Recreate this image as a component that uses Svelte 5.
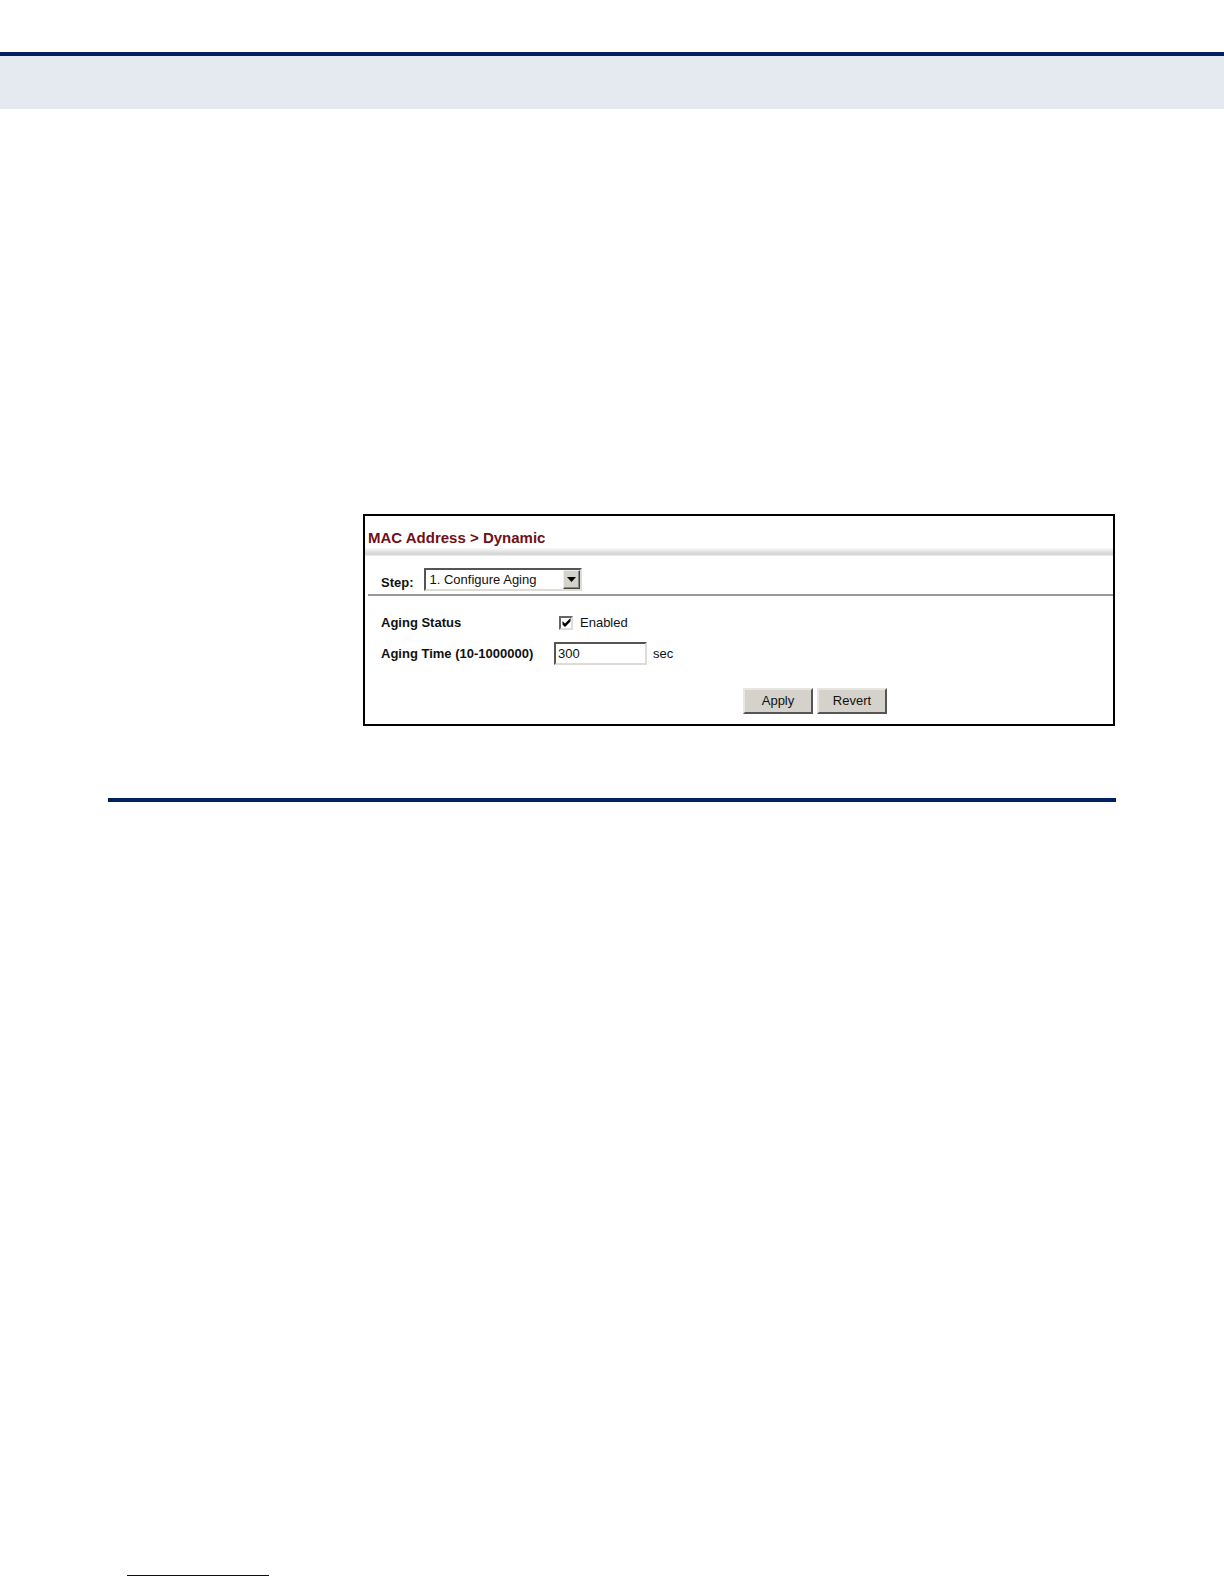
<script lang="ts">
  const steps = ['1. Configure Aging', '2. Show Dynamic MAC', '3. Clear Dynamic MAC'];

  let step = $state(steps[0]);
  let enabled = $state(true);
  let agingTime = $state('300');

  function revert() {
    step = steps[0];
    enabled = true;
    agingTime = '300';
  }
</script>

<header class="page-head"></header>

<main class="page">
  <form class="panel" onsubmit={(e) => e.preventDefault()}>
    <h1>MAC Address &gt; Dynamic</h1>
    <div class="title-bar"></div>

    <div class="step-row">
      <label class="name" for="step">Step:</label>
      <span class="select-box">
        <select id="step" bind:value={step}>
          {#each steps as s (s)}
            <option>{s}</option>
          {/each}
        </select>
        <span class="arrow" aria-hidden="true">
          <svg width="9" height="5" viewBox="0 0 9 5"><path d="M0 0h9L4.5 5z" /></svg>
        </span>
      </span>
    </div>

    <div class="fields">
      <label class="name" for="aging-status">Aging Status</label>
      <div class="value value--check">
        <span class="check-box">
          <input id="aging-status" type="checkbox" bind:checked={enabled} />
          {#if enabled}
            <svg width="9" height="9" viewBox="0 0 9 9" aria-hidden="true">
              <path d="M0.500 3L3 5.500 8.500 0v3.500L3 9 0.500 6.500z" />
            </svg>
          {/if}
        </span>
        <label for="aging-status">Enabled</label>
      </div>

      <label class="name" for="aging-time">Aging Time (10-1000000)</label>
      <div class="value">
        <input id="aging-time" class="time" type="text" bind:value={agingTime} />
        <span>sec</span>
      </div>
    </div>

    <div class="actions">
      <button type="submit">Apply</button>
      <button type="button" onclick={revert}>Revert</button>
    </div>
  </form>

  <hr class="section-rule" />
</main>

<footer class="page-foot">
  <hr />
</footer>

<style>
  :global(body) {
    background: #fff;
  }
  .page-head {
    height: 53px;
    margin-top: 52px;
    border-top: 4px solid #00205f;
    background: #e5e9f0;
  }
  .page {
    padding: 405px 108px 0;
    font-family: 'Liberation Sans', Arial, sans-serif;
    font-size: 13px;
    line-height: 16px;
    color: #111;
  }
  .panel {
    margin: 0 1px 0 255px;
    border: 2px solid #000;
    padding-bottom: 10px;
  }
  h1 {
    margin: 0;
    padding: 12px 3px 0;
    font-size: 15px;
    line-height: 20px;
    color: #701018;
  }
  .title-bar {
    height: 8px;
    background: linear-gradient(#fafafa, #d2d2d2 75%, #f0f0f0);
  }
  .step-row {
    display: flex;
    align-items: flex-end;
    gap: 10px;
    margin-left: 3px;
    padding: 12px 0 3px 13px;
    border-bottom: 2px solid #999;
  }
  .name {
    font-weight: bold;
  }
  .select-box {
    position: relative;
    display: flex;
  }
  select {
    appearance: none;
    width: 158px;
    height: 23px;
    margin: 0;
    padding: 0 22px 0 4px;
    border: 2px solid;
    border-color: #555 #dedcd6 #dedcd6 #555;
    border-radius: 0;
    background: #fff;
    font: inherit;
    color: inherit;
  }
  .arrow {
    position: absolute;
    top: 2px;
    right: 2px;
    bottom: 2px;
    display: grid;
    place-items: center;
    width: 17px;
    box-sizing: border-box;
    border: 1px solid;
    border-color: #eee #444 #444 #eee;
    box-shadow: inset -1px -1px #888;
    background: #d4d2cb;
    pointer-events: none;
  }
  .fields {
    display: grid;
    grid-template-columns: 173px 1fr;
    align-items: center;
    row-gap: 11px;
    padding: 19px 0 0 16px;
  }
  .value {
    display: flex;
    align-items: center;
    gap: 6px;
  }
  .value--check {
    gap: 7px;
    padding-left: 5px;
  }
  .check-box {
    position: relative;
    display: flex;
  }
  .check-box input {
    appearance: none;
    width: 14px;
    height: 14px;
    margin: 0;
    border: 2px solid;
    border-color: #666 #dedcd6 #dedcd6 #666;
    background: #fff;
  }
  .check-box svg {
    position: absolute;
    top: 2px;
    left: 3px;
    pointer-events: none;
  }
  .time {
    width: 93px;
    height: 23px;
    box-sizing: border-box;
    margin: 0;
    padding: 0 2px;
    border: 2px solid;
    border-color: #555 #dedcd6 #dedcd6 #555;
    background: #fff;
    font: inherit;
    color: inherit;
  }
  .actions {
    display: flex;
    justify-content: center;
    gap: 4px;
    padding: 23px 0 0 152px;
  }
  button {
    width: 70px;
    height: 26px;
    padding: 0;
    border: 2px solid;
    border-color: #e8e6e0 #555 #555 #e8e6e0;
    background: #d4d2cb;
    font: inherit;
    color: inherit;
  }
  .section-rule {
    height: 4px;
    margin: 72px 0 0;
    border: 0;
    background: #00205f;
  }
  .page-foot {
    padding: 773px 127px 8px;
  }
  .page-foot hr {
    width: 142px;
    height: 1px;
    margin: 0;
    border: 0;
    background: #000070;
  }
</style>
